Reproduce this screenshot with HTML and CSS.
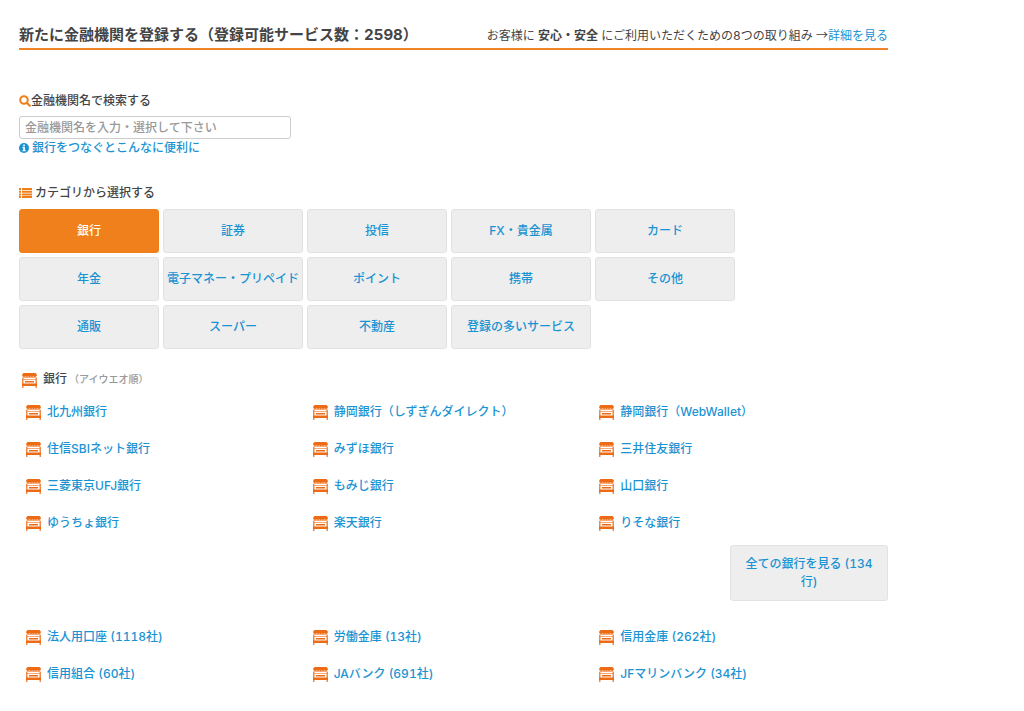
FILE: index.html
```html
<!DOCTYPE html>
<html lang="ja">
<head>
    <meta charset="UTF-8">
    <meta name="viewport" content="width=device-width, initial-scale=1.0">
    <title>金融機関を登録する</title>
    <link rel="stylesheet" href="styles.css">
</head>
<body>
    <!-- 共通アイコン -->
    <svg class="sprite" aria-hidden="true">
        <symbol id="icon-bank" viewBox="0 0 15 15">
            <path fill="#ee6b16" d="M1.500 0h12l1.300 1.500V3H.2V1.500z"/>
            <path fill="#f7b084" d="M.5 3h14v2H.5z"/>
            <path fill="#ee6b16" d="M1 3h2L2 4.600zM4 3h2L5 4.600zM6.500 3h2l-1 1.600zM9 3h2l-1 1.600zM12 3h2l-1 1.600z"/>
            <path fill="#f6a878" d="M1 6h13v1H1z"/>
            <path fill="#f08a48" d="M0 5h1.500v10H0zM13.500 5H15v10h-1.500z"/>
            <path fill="#ee6b16" d="M3 8h9v1.500H3zM0 10.500h15V13H0z"/>
        </symbol>
    </svg>

    <div class="container">
        <header class="page-header">
            <h1 class="page-title">新たに金融機関を登録する（登録可能サービス数：2598）</h1>
            <p class="safety">お客様に <strong>安心・安全</strong> にご利用いただくための8つの取り組み <span class="arrow">→</span><a href="#">詳細を見る</a></p>
        </header>

        <!-- 検索 -->
        <section class="search">
            <label class="label" for="bank-name">
                <svg class="icon-search" viewBox="0 0 12 12"><circle cx="5" cy="5" r="3.800" fill="none" stroke="currentColor" stroke-width="2"/><path d="M8 8l2.800 2.800" stroke="currentColor" stroke-width="2.200" stroke-linecap="round"/></svg>金融機関名で検索する
            </label>
            <input class="search-input" type="text" id="bank-name" placeholder="金融機関名を入力・選択して下さい">
            <a class="info-link" href="#">
                <svg class="icon-info" viewBox="0 0 10 10"><circle cx="5" cy="5" r="5" fill="currentColor"/><path fill="#fff" d="M4.200 1.500h1.700v1.400H4.200zM3.500 3.800h2.400v3.300h.7v1.100H3.500V7.100h.7V4.900h-.7z"/></svg>
                銀行をつなぐとこんなに便利に
            </a>
        </section>

        <!-- カテゴリ -->
        <section class="category">
            <h2 class="label label-category">
                <svg class="icon-list" viewBox="0 0 13 10"><path fill="currentColor" d="M0 0h2v2H0zM3 0h10v2H3zM0 2.700h2v2H0zM3 2.700h10v2H3zM0 5.400h2v2H0zM3 5.400h10v2H3zM0 8h2v2H0zM3 8h10v2H3z"/></svg>
                カテゴリから選択する
            </h2>
            <div class="category-list">
                <button type="button" class="btn active">銀行</button>
                <button type="button" class="btn">証券</button>
                <button type="button" class="btn">投信</button>
                <button type="button" class="btn">FX・貴金属</button>
                <button type="button" class="btn">カード</button>
                <button type="button" class="btn">年金</button>
                <button type="button" class="btn">電子マネー・プリペイド</button>
                <button type="button" class="btn">ポイント</button>
                <button type="button" class="btn">携帯</button>
                <button type="button" class="btn">その他</button>
                <button type="button" class="btn">通販</button>
                <button type="button" class="btn">スーパー</button>
                <button type="button" class="btn">不動産</button>
                <button type="button" class="btn">登録の多いサービス</button>
            </div>
        </section>

        <!-- 銀行一覧 -->
        <section class="banks">
            <h2 class="bank-heading"><svg class="icon-bank"><use href="#icon-bank"/></svg>銀行<small>（アイウエオ順）</small></h2>
            <ul class="bank-list">
                <li><svg class="icon-bank"><use href="#icon-bank"/></svg><a href="#">北九州銀行</a></li>
                <li><svg class="icon-bank"><use href="#icon-bank"/></svg><a href="#">静岡銀行（しずぎんダイレクト）</a></li>
                <li><svg class="icon-bank"><use href="#icon-bank"/></svg><a href="#">静岡銀行（WebWallet）</a></li>
                <li><svg class="icon-bank"><use href="#icon-bank"/></svg><a href="#">住信SBIネット銀行</a></li>
                <li><svg class="icon-bank"><use href="#icon-bank"/></svg><a href="#">みずほ銀行</a></li>
                <li><svg class="icon-bank"><use href="#icon-bank"/></svg><a href="#">三井住友銀行</a></li>
                <li><svg class="icon-bank"><use href="#icon-bank"/></svg><a href="#">三菱東京UFJ銀行</a></li>
                <li><svg class="icon-bank"><use href="#icon-bank"/></svg><a href="#">もみじ銀行</a></li>
                <li><svg class="icon-bank"><use href="#icon-bank"/></svg><a href="#">山口銀行</a></li>
                <li><svg class="icon-bank"><use href="#icon-bank"/></svg><a href="#">ゆうちょ銀行</a></li>
                <li><svg class="icon-bank"><use href="#icon-bank"/></svg><a href="#">楽天銀行</a></li>
                <li><svg class="icon-bank"><use href="#icon-bank"/></svg><a href="#">りそな銀行</a></li>
            </ul>
            <div class="more">
                <button type="button" class="btn btn-more">全ての銀行を見る (134行)</button>
            </div>
            <ul class="bank-list">
                <li><svg class="icon-bank"><use href="#icon-bank"/></svg><a href="#">法人用口座 (1118社)</a></li>
                <li><svg class="icon-bank"><use href="#icon-bank"/></svg><a href="#">労働金庫 (13社)</a></li>
                <li><svg class="icon-bank"><use href="#icon-bank"/></svg><a href="#">信用金庫 (262社)</a></li>
                <li><svg class="icon-bank"><use href="#icon-bank"/></svg><a href="#">信用組合 (60社)</a></li>
                <li><svg class="icon-bank"><use href="#icon-bank"/></svg><a href="#">JAバンク (691社)</a></li>
                <li><svg class="icon-bank"><use href="#icon-bank"/></svg><a href="#">JFマリンバンク (34社)</a></li>
            </ul>
        </section>
    </div>
</body>
</html>
```

FILE: styles.css
```css
* {
    margin: 0;
    padding: 0;
    box-sizing: border-box;
}

body {
    font-family: Inter, "Noto Sans CJK JP", sans-serif;
    font-size: 12px;
    font-weight: 500;
    font-variant-numeric: tabular-nums;
    line-height: 18px;
    color: #444;
    background: #fff;
}

a {
    color: #1a93d2;
    text-decoration: none;
}

a:hover {
    text-decoration: underline;
}

ul {
    list-style: none;
}

.sprite {
    display: none;
}

.container {
    max-width: 907px;
    padding: 26px 19px 19px;
}

/* ヘッダー */
.page-header {
    display: flex;
    flex-wrap: wrap;
    justify-content: space-between;
    padding-bottom: 3px;
    border-bottom: 2px solid #ee8426;
}

.page-title {
    font-size: 15px;
    font-weight: 700;
}

.safety {
    font-weight: 400;
}

.arrow {
    font-family: "Noto Sans CJK JP", sans-serif;
}

/* 検索 */
.search {
    display: flex;
    flex-direction: column;
    align-items: flex-start;
    margin-top: 42px;
}

.label {
    display: flex;
    align-items: center;
    font-size: 12px;
    font-weight: 500;
}

.icon-search {
    width: 12px;
    height: 12px;
    color: #ef7f1a;
}

.search-input {
    width: 272px;
    max-width: 100%;
    height: 23px;
    margin-top: 6px;
    padding: 0 5px;
    border: 1px solid #ccc;
    border-radius: 3px;
    font: inherit;
    color: #444;
}

.search-input::placeholder {
    color: #999;
    opacity: 1;
}

.info-link {
    display: flex;
    align-items: center;
    gap: 3px;
}

.icon-info {
    width: 10px;
    height: 10px;
}

/* カテゴリ */
.category {
    margin-top: 27px;
}

.label-category {
    gap: 3px;
}

.icon-list {
    width: 13px;
    height: 10px;
    color: #ef7f1a;
}

.category-list {
    display: grid;
    grid-template-columns: repeat(auto-fill, 140px);
    gap: 4px;
    max-width: 720px;
    margin-top: 7px;
}

.btn {
    height: 44px;
    border: 1px solid #e2e2e2;
    border-radius: 3px;
    background: #eee;
    color: #1a93d2;
    font: inherit;
    font-variant-numeric: tabular-nums;
    cursor: pointer;
}

.btn.active {
    border-color: #ef7f1a;
    background: #f0801b;
    color: #fff;
}

/* 銀行一覧 */
.banks {
    margin-top: 21px;
}

.bank-heading {
    display: flex;
    align-items: center;
    padding-left: 3px;
    font-size: 12px;
    font-weight: 500;
}

.bank-heading small {
    margin-left: 2px;
    font-size: 10px;
    color: #999;
}

.icon-bank {
    flex: none;
    width: 15px;
    height: 15px;
    margin-top: 2px;
    margin-right: 6px;
}

.bank-list {
    display: grid;
    grid-template-columns: repeat(3, 1fr);
    margin-top: 5px;
    padding: 0 2px 0 7px;
}

.bank-list li {
    display: flex;
    align-items: center;
    min-height: 37px;
}

.more {
    display: flex;
    justify-content: flex-end;
    margin: 4px 0 17px;
}

.btn-more {
    width: 158px;
    height: auto;
    padding: 9px 10px;
}
```
